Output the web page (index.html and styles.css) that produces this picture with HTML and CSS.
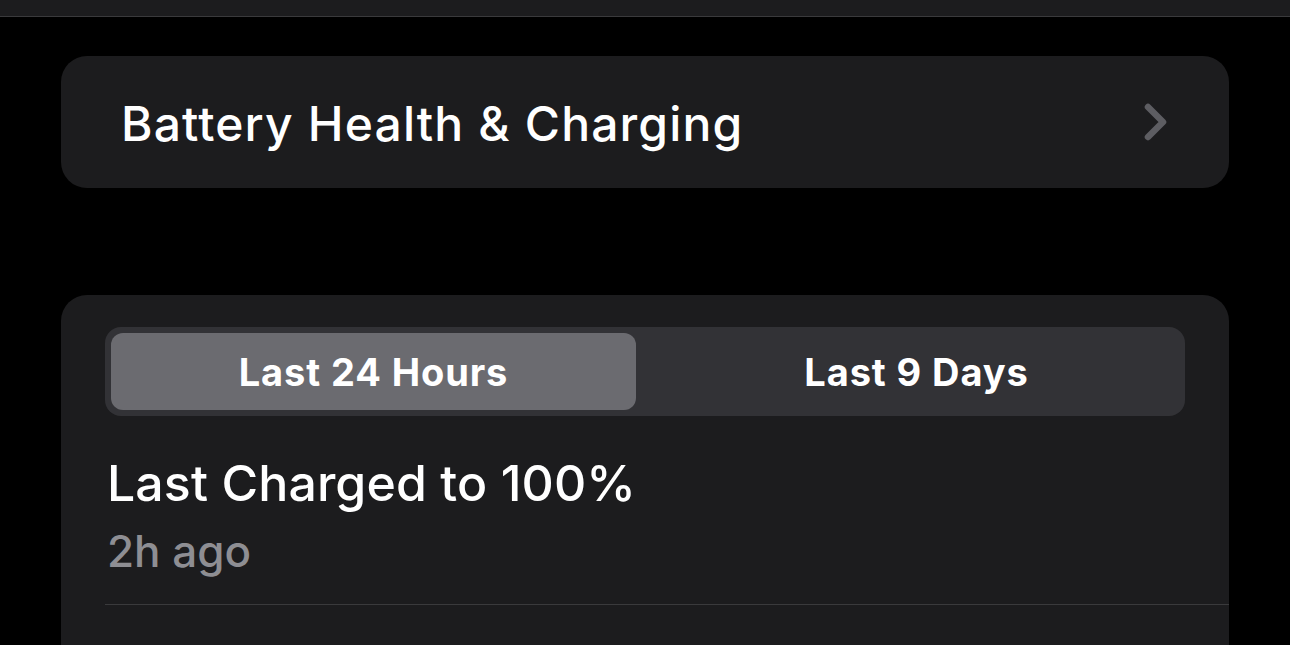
FILE: index.html
```html
<!DOCTYPE html>
<html lang="en">
<head>
    <meta charset="UTF-8">
    <meta name="viewport" content="width=device-width, initial-scale=1.0">
    <title>Battery</title>
    <link rel="stylesheet" href="styles.css">
</head>
<body>
    <div class="top-bar"></div>

    <main class="content">
        <a class="card link-row" href="#">
            <span class="link-title">Battery Health &amp; Charging</span>
            <svg class="chevron" width="24" height="40" viewBox="0 0 24 40">
                <path d="M4 5 L19 20 L4 35" fill="none" stroke="currentColor" stroke-width="6.5" stroke-linecap="round" stroke-linejoin="round"/>
            </svg>
        </a>

        <section class="card usage">
            <div class="segmented">
                <button class="segment active">Last 24 Hours</button>
                <button class="segment">Last 9 Days</button>
            </div>

            <div class="charge-info">
                <div class="charge-title">Last Charged to 100%</div>
                <div class="charge-time">2h ago</div>
            </div>
            <div class="divider"></div>
        </section>
    </main>
</body>
</html>
```

FILE: styles.css
```css
html, body {
    margin: 0;
    padding: 0;
    background-color: #000;
    height: 100%;
    overflow: hidden;
}

body {
    font-family: Inter, "Noto Sans", sans-serif;
    color: #fff;
}

.top-bar {
    height: 16px;
    background-color: #1c1c1e;
    border-bottom: 1px solid #3a3a3c;
}

.content {
    padding: 39px 61px 0 61px;
}

.card {
    background-color: #1c1c1e;
    border-radius: 26px;
}

.link-row {
    display: flex;
    align-items: center;
    justify-content: space-between;
    height: 132px;
    padding: 0 60px;
    box-sizing: border-box;
    color: #fff;
    text-decoration: none;
}

.link-title {
    font-size: 48px;
    font-weight: 550;
    letter-spacing: 1.15px;
    margin-top: 2px;
}

.chevron {
    color: #5d5d62;
    margin-right: 1px;
}

.usage {
    margin-top: 107px;
    padding: 32px 0 40px 44px;
    border-bottom-left-radius: 0;
    border-bottom-right-radius: 0;
}

.segmented {
    display: flex;
    gap: 18px;
    width: 1080px;
    height: 89px;
    box-sizing: border-box;
    padding: 6px;
    background-color: #323236;
    border-radius: 16px;
}

.segment {
    flex: 1;
    border: none;
    background: none;
    color: #fff;
    font-family: inherit;
    font-size: 38px;
    font-weight: 700;
    letter-spacing: 0.9px;
    border-radius: 12px;
    padding: 0;
}

.segment.active {
    background-color: #6b6b70;
}

.charge-info {
    padding: 37px 0 27px 2px;
}

.charge-title {
    font-size: 50px;
    font-weight: 550;
    letter-spacing: 0.1px;
    line-height: 60px;
}

.charge-time {
    margin-top: 12px;
    font-size: 44px;
    font-weight: 550;
    color: #8e8e93;
    line-height: 52px;
}

.divider {
    height: 1px;
    background-color: #3a3a3c;
}
```
